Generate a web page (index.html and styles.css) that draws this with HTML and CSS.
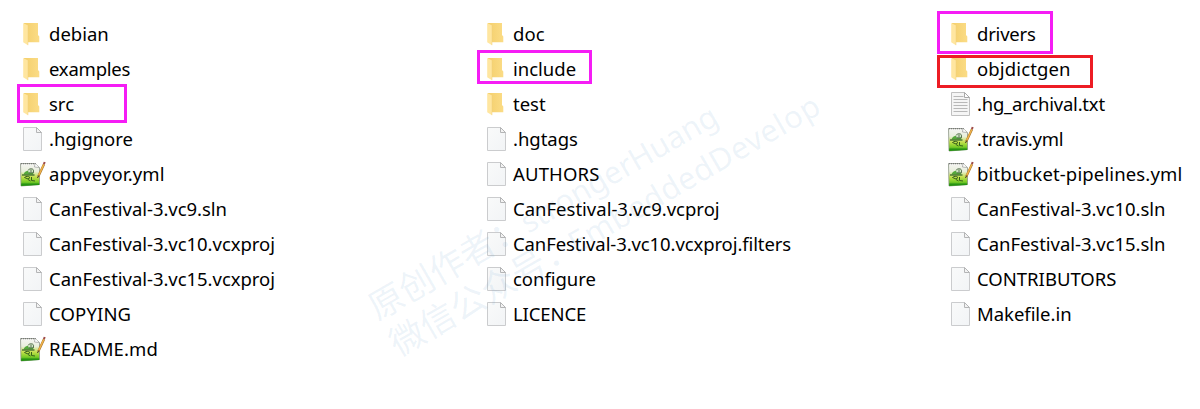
FILE: index.html
```html
<!DOCTYPE html>
<html lang="en">
<head>
<meta charset="utf-8">
<title>Files</title>
<link rel="stylesheet" href="styles.css">
</head>
<body>
<svg class="defs" aria-hidden="true">
  <defs>
    <linearGradient id="gf" x1="0" x2="1"><stop offset="0" stop-color="#f4cf6c"/><stop offset="1" stop-color="#fbdc86"/></linearGradient>
    <linearGradient id="gb" x1="0" y1="0" x2="1" y2="1"><stop offset="0" stop-color="#f9fafa"/><stop offset="1" stop-color="#f2f4f6"/></linearGradient>
    <linearGradient id="gg" x1="0" y1="0" x2="0" y2="1"><stop offset="0" stop-color="#f5f5f3"/><stop offset=".35" stop-color="#e9efdc"/><stop offset=".6" stop-color="#c4df4c"/><stop offset=".8" stop-color="#7fcf2a"/><stop offset="1" stop-color="#2f9c14"/></linearGradient>
    <symbol id="folder" viewBox="0 0 26 28">
      <path d="M4 3h14v12l1.300 1.500V22.200H4z" fill="url(#gf)"/>
      <path d="M3.200 3l4.800 2.500v19.700l-4.800-3z" fill="#ffe6a0"/>
      <path d="M8 5.500v19.700" stroke="#efcf7c" stroke-width=".5"/>
    </symbol>
    <symbol id="blank" viewBox="0 0 26 28">
      <path d="M3.500 2.500h13l5 5v18h-18z" fill="url(#gb)" stroke="#cbccce"/>
      <path d="M16.500 2.500v5h5z" fill="#f3f3f3" stroke="#b4b5b6"/>
    </symbol>
    <symbol id="text" viewBox="0 0 26 28">
      <path d="M3.500 2.500h13l5 5v18h-18z" fill="#f5f5f5" stroke="#c0c0c0"/>
      <path d="M16.500 2.500v5h5z" fill="#fff" stroke="#a9a9a9"/>
      <path d="M5.500 6.500h10M5.500 9.500h14M5.500 12.500h14M5.500 15.500h14M5.500 18.500h14M5.500 21.500h14" stroke="#b8b8b8"/>
    </symbol>
    <symbol id="npp" viewBox="0 0 26 28">
      <path d="M.5 3.500h14.500l4.500 4v17L1 26z" fill="url(#gg)" stroke="#8b9485" stroke-width=".8"/>
      <path d="M1 3.600h15" stroke="#777" stroke-width="1.300" stroke-dasharray="1 1"/>
      <path d="M15 3.500l-.5 3.500 4.500.5" fill="#fff" stroke="#999" stroke-width=".7"/>
      <path d="M3.500 14.500c.5-2.500 3-4 5.500-3.800.5-2.200 4.500-2.200 4.500.5l-.5 3.300H3.500z" fill="#55a83c"/>
      <path d="M8 10.300c1-1.800 5-2.300 5.500 0v2.500H8.500" fill="#cfe5c4" stroke="#415b3a" stroke-width=".8"/>
      <path d="M11 9.500v2.500" stroke="#415b3a" stroke-width=".8"/>
      <path d="M2 15h12.500" stroke="#2f5f20" stroke-width="1.200"/>
      <path d="M4.500 17.500c1.500-1.500 4-1.500 5.500 0l-2 1.500zM8 19.500l2.500 1.500M11.500 17v3.500l3.500.5" fill="none" stroke="#37601c" stroke-width="1"/>
      <path d="M1.200 23.500h18V25L1.200 26z" fill="#269312"/>
      <path d="M24 4.300L18.300 16.500" stroke="#a8772f" stroke-width="2.300"/>
      <path d="M23.800 4.500L18.500 15.800" stroke="#f2b44a" stroke-width="1.400"/>
      <path d="M24.700 2l-.8 2.200" stroke="#9d4a48" stroke-width="2"/>
      <path d="M18.700 15.500l-1.200 2.500" stroke="#3e3424" stroke-width="1"/>
    </symbol>
  </defs>
</svg>
<main class="files">
  <div class="column">
    <div class="file"><svg class="icon"><use href="#folder"/></svg><span class="name">debian</span></div>
    <div class="file"><svg class="icon"><use href="#folder"/></svg><span class="name tightest">examples</span></div>
    <div class="file"><svg class="icon"><use href="#folder"/></svg><span class="name">src</span><i class="mark mark-src"></i></div>
    <div class="file"><svg class="icon"><use href="#blank"/></svg><span class="name tight">.hgignore</span></div>
    <div class="file"><svg class="icon"><use href="#npp"/></svg><span class="name loose">appveyor.yml</span></div>
    <div class="file"><svg class="icon"><use href="#blank"/></svg><span class="name tight">CanFestival-3.vc9.sln</span></div>
    <div class="file"><svg class="icon"><use href="#blank"/></svg><span class="name tight">CanFestival-3.vc10.vcxproj</span></div>
    <div class="file"><svg class="icon"><use href="#blank"/></svg><span class="name tight">CanFestival-3.vc15.vcxproj</span></div>
    <div class="file"><svg class="icon"><use href="#blank"/></svg><span class="name loose">COPYING</span></div>
    <div class="file"><svg class="icon"><use href="#npp"/></svg><span class="name loose">README.md</span></div>
  </div>
  <div class="column">
    <div class="file"><svg class="icon"><use href="#folder"/></svg><span class="name loose">doc</span></div>
    <div class="file"><svg class="icon"><use href="#folder"/></svg><span class="name">include</span><i class="mark mark-include"></i></div>
    <div class="file"><svg class="icon"><use href="#folder"/></svg><span class="name">test</span></div>
    <div class="file"><svg class="icon"><use href="#blank"/></svg><span class="name tight">.hgtags</span></div>
    <div class="file"><svg class="icon"><use href="#blank"/></svg><span class="name loose">AUTHORS</span></div>
    <div class="file"><svg class="icon"><use href="#blank"/></svg><span class="name">CanFestival-3.vc9.vcproj</span></div>
    <div class="file"><svg class="icon"><use href="#blank"/></svg><span class="name tighter">CanFestival-3.vc10.vcxproj.filters</span></div>
    <div class="file"><svg class="icon"><use href="#blank"/></svg><span class="name tight">configure</span></div>
    <div class="file"><svg class="icon"><use href="#blank"/></svg><span class="name tighter">LICENCE</span></div>
  </div>
  <div class="column">
    <div class="file"><svg class="icon"><use href="#folder"/></svg><span class="name tightest">drivers</span><i class="mark mark-drivers"></i></div>
    <div class="file"><svg class="icon"><use href="#folder"/></svg><span class="name loose">objdictgen</span><i class="mark mark-objdictgen"></i></div>
    <div class="file"><svg class="icon"><use href="#text"/></svg><span class="name tightest">.hg_archival.txt</span></div>
    <div class="file"><svg class="icon"><use href="#npp"/></svg><span class="name tightest">.travis.yml</span></div>
    <div class="file"><svg class="icon"><use href="#npp"/></svg><span class="name loose">bitbucket-pipelines.yml</span></div>
    <div class="file"><svg class="icon"><use href="#blank"/></svg><span class="name tight">CanFestival-3.vc10.sln</span></div>
    <div class="file"><svg class="icon"><use href="#blank"/></svg><span class="name tight">CanFestival-3.vc15.sln</span></div>
    <div class="file"><svg class="icon"><use href="#blank"/></svg><span class="name">CONTRIBUTORS</span></div>
    <div class="file"><svg class="icon"><use href="#blank"/></svg><span class="name tight">Makefile.in</span></div>
  </div>
</main>
<svg class="watermark" viewBox="0 0 1200 409">
  <g transform="translate(377.500 321) rotate(-30)">
    <text class="cjk" x="0" y="0">原创作者：</text>
    <text x="174" y="0" textLength="222">strongerHuang</text>
    <text class="cjk" x="0" y="42">微信公众号：</text>
    <text x="205" y="42" textLength="285">EmbeddedDevelop</text>
  </g>
</svg>
</body>
</html>
```
FILE: styles.css
```css
body {
  margin: 0;
  background: #fff;
  color: #000;
  font-family: "Noto Sans", "Noto Sans CJK SC", sans-serif;
  font-size: 18.5px;
}
.defs { position: absolute; width: 0; height: 0; }
.files {
  display: grid;
  grid-template-columns: 464px 464px 252px;
  padding: 16px 0 0 20px;
}
.column { display: flex; flex-direction: column; }
.file {
  position: relative;
  display: flex;
  align-items: center;
  gap: 3px;
  height: 35px;
}
.icon { flex: none; width: 26px; height: 28px; margin-top: 1px; }
.name { line-height: 35px; white-space: nowrap; }
.loose { letter-spacing: .14px; }
.tight { letter-spacing: -.04px; }
.tighter { letter-spacing: -.1px; }
.tightest { letter-spacing: -.22px; }
.mark {
  position: absolute;
  box-sizing: border-box;
  border: 3px solid #f51df5;
}
.mark-src { left: -3px; top: -2px; width: 110px; height: 39px; }
.mark-include { left: -7px; top: -1px; width: 115px; height: 34px; }
.mark-drivers { left: -11px; top: -5px; width: 116px; height: 43px; }
.mark-objdictgen { left: -11px; top: 4px; width: 156px; height: 33px; border-color: #ed1c24; }
.watermark {
  position: absolute;
  left: 0;
  top: 0;
  width: 1200px;
  height: 409px;
  pointer-events: none;
  fill: #5090c8;
  fill-opacity: .1;
  font-family: "Noto Sans", "Noto Sans CJK SC", sans-serif;
  font-size: 31px;
}
.cjk { font-family: "Noto Sans CJK SC", sans-serif; font-size: 35px; }
```
